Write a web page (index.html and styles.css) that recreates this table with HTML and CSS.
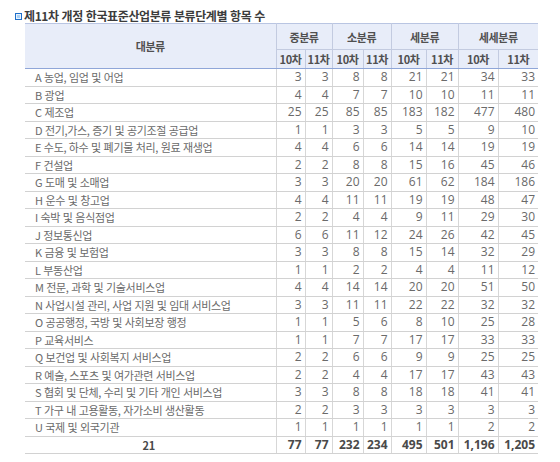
FILE: index.html
```html
<!DOCTYPE html>
<html lang="ko">
<head>
<meta charset="utf-8">
<link rel="stylesheet" href="styles.css">
</head>
<body>
<div class="page">
  <h1 class="title"><span class="mark"></span>제11차 개정 한국표준산업분류 분류단계별 항목 수</h1>
  <table class="grid">
    <colgroup>
      <col class="c-name"><col class="c1"><col class="c2"><col class="c3"><col class="c4"><col class="c5"><col class="c6"><col class="c7"><col class="c8">
    </colgroup>
    <thead>
      <tr class="h1">
        <th rowspan="2" class="hname">대분류</th>
        <th colspan="2">중분류</th>
        <th colspan="2">소분류</th>
        <th colspan="2">세분류</th>
        <th colspan="2">세세분류</th>
      </tr>
      <tr class="h2">
        <th>10차</th><th>11차</th><th>10차</th><th>11차</th><th>10차</th><th>11차</th><th>10차</th><th>11차</th>
      </tr>
    </thead>
    <tbody>
      <tr><td class="name">A 농업, 임업 및 어업</td><td>3</td><td>3</td><td>8</td><td>8</td><td>21</td><td>21</td><td>34</td><td>33</td></tr>
      <tr><td class="name">B 광업</td><td>4</td><td>4</td><td>7</td><td>7</td><td>10</td><td>10</td><td>11</td><td>11</td></tr>
      <tr><td class="name">C 제조업</td><td>25</td><td>25</td><td>85</td><td>85</td><td>183</td><td>182</td><td>477</td><td>480</td></tr>
      <tr><td class="name">D 전기,가스, 증기 및 공기조절 공급업</td><td>1</td><td>1</td><td>3</td><td>3</td><td>5</td><td>5</td><td>9</td><td>10</td></tr>
      <tr><td class="name">E 수도, 하수 및 폐기물 처리, 원료 재생업</td><td>4</td><td>4</td><td>6</td><td>6</td><td>14</td><td>14</td><td>19</td><td>19</td></tr>
      <tr><td class="name">F 건설업</td><td>2</td><td>2</td><td>8</td><td>8</td><td>15</td><td>16</td><td>45</td><td>46</td></tr>
      <tr><td class="name">G 도매 및 소매업</td><td>3</td><td>3</td><td>20</td><td>20</td><td>61</td><td>62</td><td>184</td><td>186</td></tr>
      <tr><td class="name">H 운수 및 창고업</td><td>4</td><td>4</td><td>11</td><td>11</td><td>19</td><td>19</td><td>48</td><td>47</td></tr>
      <tr><td class="name">I 숙박 및 음식점업</td><td>2</td><td>2</td><td>4</td><td>4</td><td>9</td><td>11</td><td>29</td><td>30</td></tr>
      <tr><td class="name">J 정보통신업</td><td>6</td><td>6</td><td>11</td><td>12</td><td>24</td><td>26</td><td>42</td><td>45</td></tr>
      <tr><td class="name">K 금융 및 보험업</td><td>3</td><td>3</td><td>8</td><td>8</td><td>15</td><td>14</td><td>32</td><td>29</td></tr>
      <tr><td class="name">L 부동산업</td><td>1</td><td>1</td><td>2</td><td>2</td><td>4</td><td>4</td><td>11</td><td>12</td></tr>
      <tr><td class="name">M 전문, 과학 및 기술서비스업</td><td>4</td><td>4</td><td>14</td><td>14</td><td>20</td><td>20</td><td>51</td><td>50</td></tr>
      <tr><td class="name">N 사업시설 관리, 사업 지원 및 임대 서비스업</td><td>3</td><td>3</td><td>11</td><td>11</td><td>22</td><td>22</td><td>32</td><td>32</td></tr>
      <tr><td class="name">O 공공행정, 국방 및 사회보장 행정</td><td>1</td><td>1</td><td>5</td><td>6</td><td>8</td><td>10</td><td>25</td><td>28</td></tr>
      <tr><td class="name">P 교육서비스</td><td>1</td><td>1</td><td>7</td><td>7</td><td>17</td><td>17</td><td>33</td><td>33</td></tr>
      <tr><td class="name">Q 보건업 및 사회복지 서비스업</td><td>2</td><td>2</td><td>6</td><td>6</td><td>9</td><td>9</td><td>25</td><td>25</td></tr>
      <tr><td class="name">R 예술, 스포츠 및 여가관련 서비스업</td><td>2</td><td>2</td><td>4</td><td>4</td><td>17</td><td>17</td><td>43</td><td>43</td></tr>
      <tr><td class="name">S 협회 및 단체, 수리 및 기타 개인 서비스업</td><td>3</td><td>3</td><td>8</td><td>8</td><td>18</td><td>18</td><td>41</td><td>41</td></tr>
      <tr><td class="name">T 가구 내 고용활동, 자가소비 생산활동</td><td>2</td><td>2</td><td>3</td><td>3</td><td>3</td><td>3</td><td>3</td><td>3</td></tr>
      <tr><td class="name">U 국제 및 외국기관</td><td>1</td><td>1</td><td>1</td><td>1</td><td>1</td><td>1</td><td>2</td><td>2</td></tr>
      <tr class="total"><td class="name">21</td><td>77</td><td>77</td><td>232</td><td>234</td><td>495</td><td>501</td><td>1,196</td><td>1,205</td></tr>
    </tbody>
  </table>
</div>
</body>
</html>
```

FILE: styles.css
```css
html, body {
  margin: 0;
  padding: 0;
  background: #ffffff;
}

.page {
  width: 560px;
  height: 462px;
  padding: 10px 0 0 15px;
  box-sizing: border-box;
  font-family: "Open Sans", "Noto Sans CJK KR", sans-serif;
  color: #666666;
}

.title {
  margin: 0;
  display: flex;
  align-items: center;
  gap: 1px;
  font-family: "Noto Sans CJK KR", sans-serif;
  font-size: 12px;
  line-height: 12px;
  font-weight: 700;
  color: #3c3c3c;
  letter-spacing: -0.4px;
}

.mark {
  display: inline-block;
  width: 5px;
  height: 5px;
  border: 1px solid #1f6fc9;
  background: #a9d0f5;
  box-shadow: inset 0 0 0 1px #e8f3fd;
  margin-right: 1px;
}

.grid {
  margin: 1px 0 0 10px;
  border-collapse: collapse;
  table-layout: fixed;
  width: 513px;
}

.c-name { width: 251px; }
.c1 { width: 29px; }
.c2 { width: 27px; }
.c3 { width: 31px; }
.c4 { width: 28px; }
.c5 { width: 35px; }
.c6 { width: 32px; }
.c7 { width: 40px; }
.c8 { width: 40px; }

.grid th {
  background: #e8edf9;
  color: #505050;
  font-family: "Noto Sans CJK KR", sans-serif;
  font-weight: 700;
  font-size: 11px;
  letter-spacing: -0.4px;
  border: 1px solid #c3cbe0;
  padding: 0;
  text-align: center;
}

.grid thead tr.h1 th {
  border-top: 1px solid #b9c5e2;
}

.h1 { height: 26px; }
.h2 { height: 19px; }

.grid thead tr.h2 th,
.grid th.hname {
  border-bottom: 1px solid #8fa6d8;
}

.grid th.hname {
  border-left: none;
}

.grid th:last-child {
  border-right: none;
}

.grid td {
  height: 16.5px;
  padding: 0 3px 0 0;
  border-bottom: 1px solid #d2d2d2;
  border-left: 1px solid #d7d7d7;
  text-align: right;
  font-size: 12px;
  line-height: 12px;
  color: #6a6a6a;
  white-space: nowrap;
}

.grid td.name {
  border-left: none;
  text-align: left;
  padding-left: 10px;
  font-family: "Noto Sans CJK KR", sans-serif;
  font-size: 11px;
  letter-spacing: -0.35px;
  color: #6a6a6a;
}

.grid tr.total td {
  font-weight: 700;
  color: #4a4a4a;
  height: 16px;
}

.grid tr.total td.name {
  text-align: center;
  padding-left: 0;
}
```
